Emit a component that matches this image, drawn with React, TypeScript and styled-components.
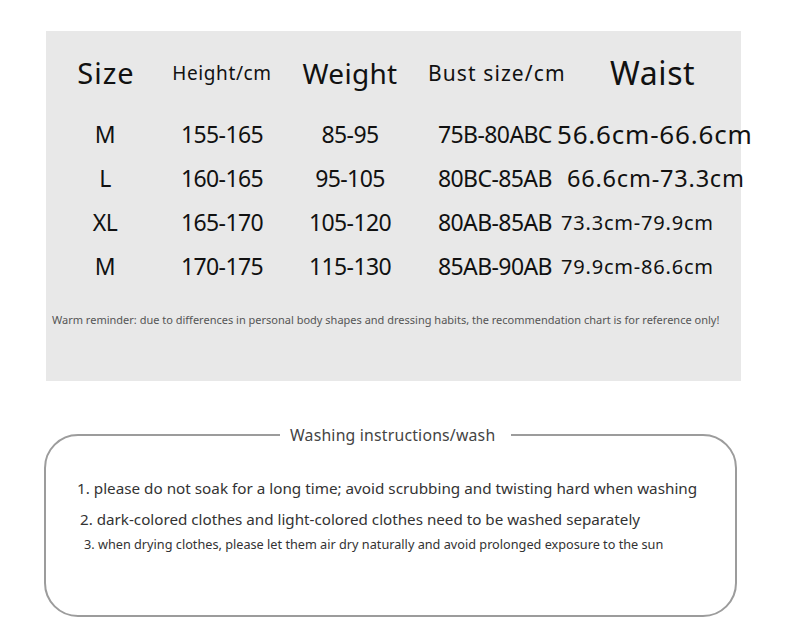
import React from "react";
import styled, { createGlobalStyle } from "styled-components";

const GlobalStyle = createGlobalStyle`
  html, body {
    margin: 0;
    padding: 0;
    background: #fff;
  }
  body {
    font-family: "Noto Sans", "Open Sans", sans-serif;
    color: #111;
  }
`;

const rows = [
  { size: "M", height: "155-165", weight: "85-95", bust: "75B-80ABC", waist: "56.6cm-66.6cm", waistSize: 26, indent: 1 },
  { size: "L", height: "160-165", weight: "95-105", bust: "80BC-85AB", waist: "66.6cm-73.3cm", waistSize: 23.5, indent: 11 },
  { size: "XL", height: "165-170", weight: "105-120", bust: "80AB-85AB", waist: "73.3cm-79.9cm", waistSize: 20, indent: 5 },
  { size: "M", height: "170-175", weight: "115-130", bust: "85AB-90AB", waist: "79.9cm-86.6cm", waistSize: 20, indent: 5 },
];

const washing = [
  { text: "1. please do not soak for a long time; avoid scrubbing and twisting hard when washing", size: 15.25, indent: 31 },
  { text: "2. dark-colored clothes and light-colored clothes need to be washed separately", size: 15.2, indent: 34 },
  { text: "3. when drying clothes, please let them air dry naturally and avoid prolonged exposure to the sun", size: 12.7, indent: 38 },
];

export default function App() {
  return (
    <Page>
      <GlobalStyle />
      <Chart>
        <HeadRow>
          <Head $size={29} $spacing={1} $indent={2}>Size</Head>
          <Head $size={19} $spacing={0.6}>Height/cm</Head>
          <Head $size={28} $spacing={0.3}>Weight</Head>
          <Head $size={21} $spacing={1.1} $align="left" $indent={22}>Bust size/cm</Head>
          <Head $size={32} $spacing={0.6} $align="left" $indent={54}>Waist</Head>
        </HeadRow>
        {rows.map((r, i) => (
          <Row key={i}>
            <Cell>{r.size}</Cell>
            <Cell>{r.height}</Cell>
            <Cell>{r.weight}</Cell>
            <Cell $align="left" $indent={32}>{r.bust}</Cell>
            <Waist $size={r.waistSize} $indent={r.indent}>{r.waist}</Waist>
          </Row>
        ))}
        <Reminder>
          Warm reminder: due to differences in personal body shapes and dressing habits, the
          recommendation chart is for reference only!
        </Reminder>
      </Chart>

      <WashBox>
        <Legend>Washing instructions/wash</Legend>
        <List>
          {washing.map((w, i) => (
            <Item key={i} $size={w.size} $indent={w.indent}>
              {w.text}
            </Item>
          ))}
        </List>
      </WashBox>
    </Page>
  );
}

const Page = styled.div`
  width: 790px;
  height: 640px;
  padding-top: 31px;
  box-sizing: border-box;
  overflow: hidden;
`;

const Chart = styled.section`
  margin-left: 46px;
  width: 695px;
  height: 350px;
  background: #e8e8e8;
  box-sizing: border-box;
  padding: 20px 0 0 14px;
`;

const Row = styled.div`
  display: grid;
  grid-template-columns: 90px 144px 112px 150px 1fr;
  height: 44px;
`;

const HeadRow = styled(Row)`
  height: 38px;
  margin-bottom: 23px;
`;

const Head = styled.div<{ $size: number; $spacing?: number; $align?: string; $indent?: number }>`
  display: flex;
  align-items: center;
  justify-content: ${(p) => (p.$align === "left" ? "flex-start" : "center")};
  padding-left: ${(p) => p.$indent ?? 0}px;
  font-size: ${(p) => p.$size}px;
  letter-spacing: ${(p) => p.$spacing ?? 0}px;
  color: #111;
  white-space: nowrap;
`;

const Cell = styled.div<{ $align?: string; $indent?: number }>`
  display: flex;
  align-items: center;
  justify-content: ${(p) => (p.$align === "left" ? "flex-start" : "center")};
  padding-left: ${(p) => p.$indent ?? 0}px;
  font-size: 23px;
  letter-spacing: -0.6px;
  color: #111;
  white-space: nowrap;
`;

const Waist = styled.div<{ $size: number; $indent: number }>`
  display: flex;
  align-items: center;
  padding-left: ${(p) => p.$indent}px;
  font-size: ${(p) => p.$size}px;
  letter-spacing: 0.8px;
  color: #111;
  white-space: nowrap;
`;

const Reminder = styled.p`
  margin: 25px 0 0 -8px;
  font-size: 11px;
  line-height: 14px;
  color: #555;
  white-space: nowrap;
`;

const WashBox = styled.fieldset`
  margin: 43px 0 0 44px;
  width: 693px;
  height: 193px;
  box-sizing: border-box;
  border: 2px solid #9c9c9c;
  border-radius: 34px;
  padding: 0;
`;

const Legend = styled.legend`
  margin-left: 234px;
  padding: 0 16px 0 10px;
  font-size: 15.8px;
  color: #444;
  letter-spacing: 0.2px;
`;

const List = styled.div`
  display: flex;
  flex-direction: column;
  padding-top: 33px;
  gap: 13px;
`;

const Item = styled.div<{ $size: number; $indent: number }>`
  padding-left: ${(p) => p.$indent}px;
  font-size: ${(p) => p.$size}px;
  line-height: 18px;
  color: #333;
  white-space: nowrap;

  &:last-child {
    margin-top: -6px;
  }
`;
